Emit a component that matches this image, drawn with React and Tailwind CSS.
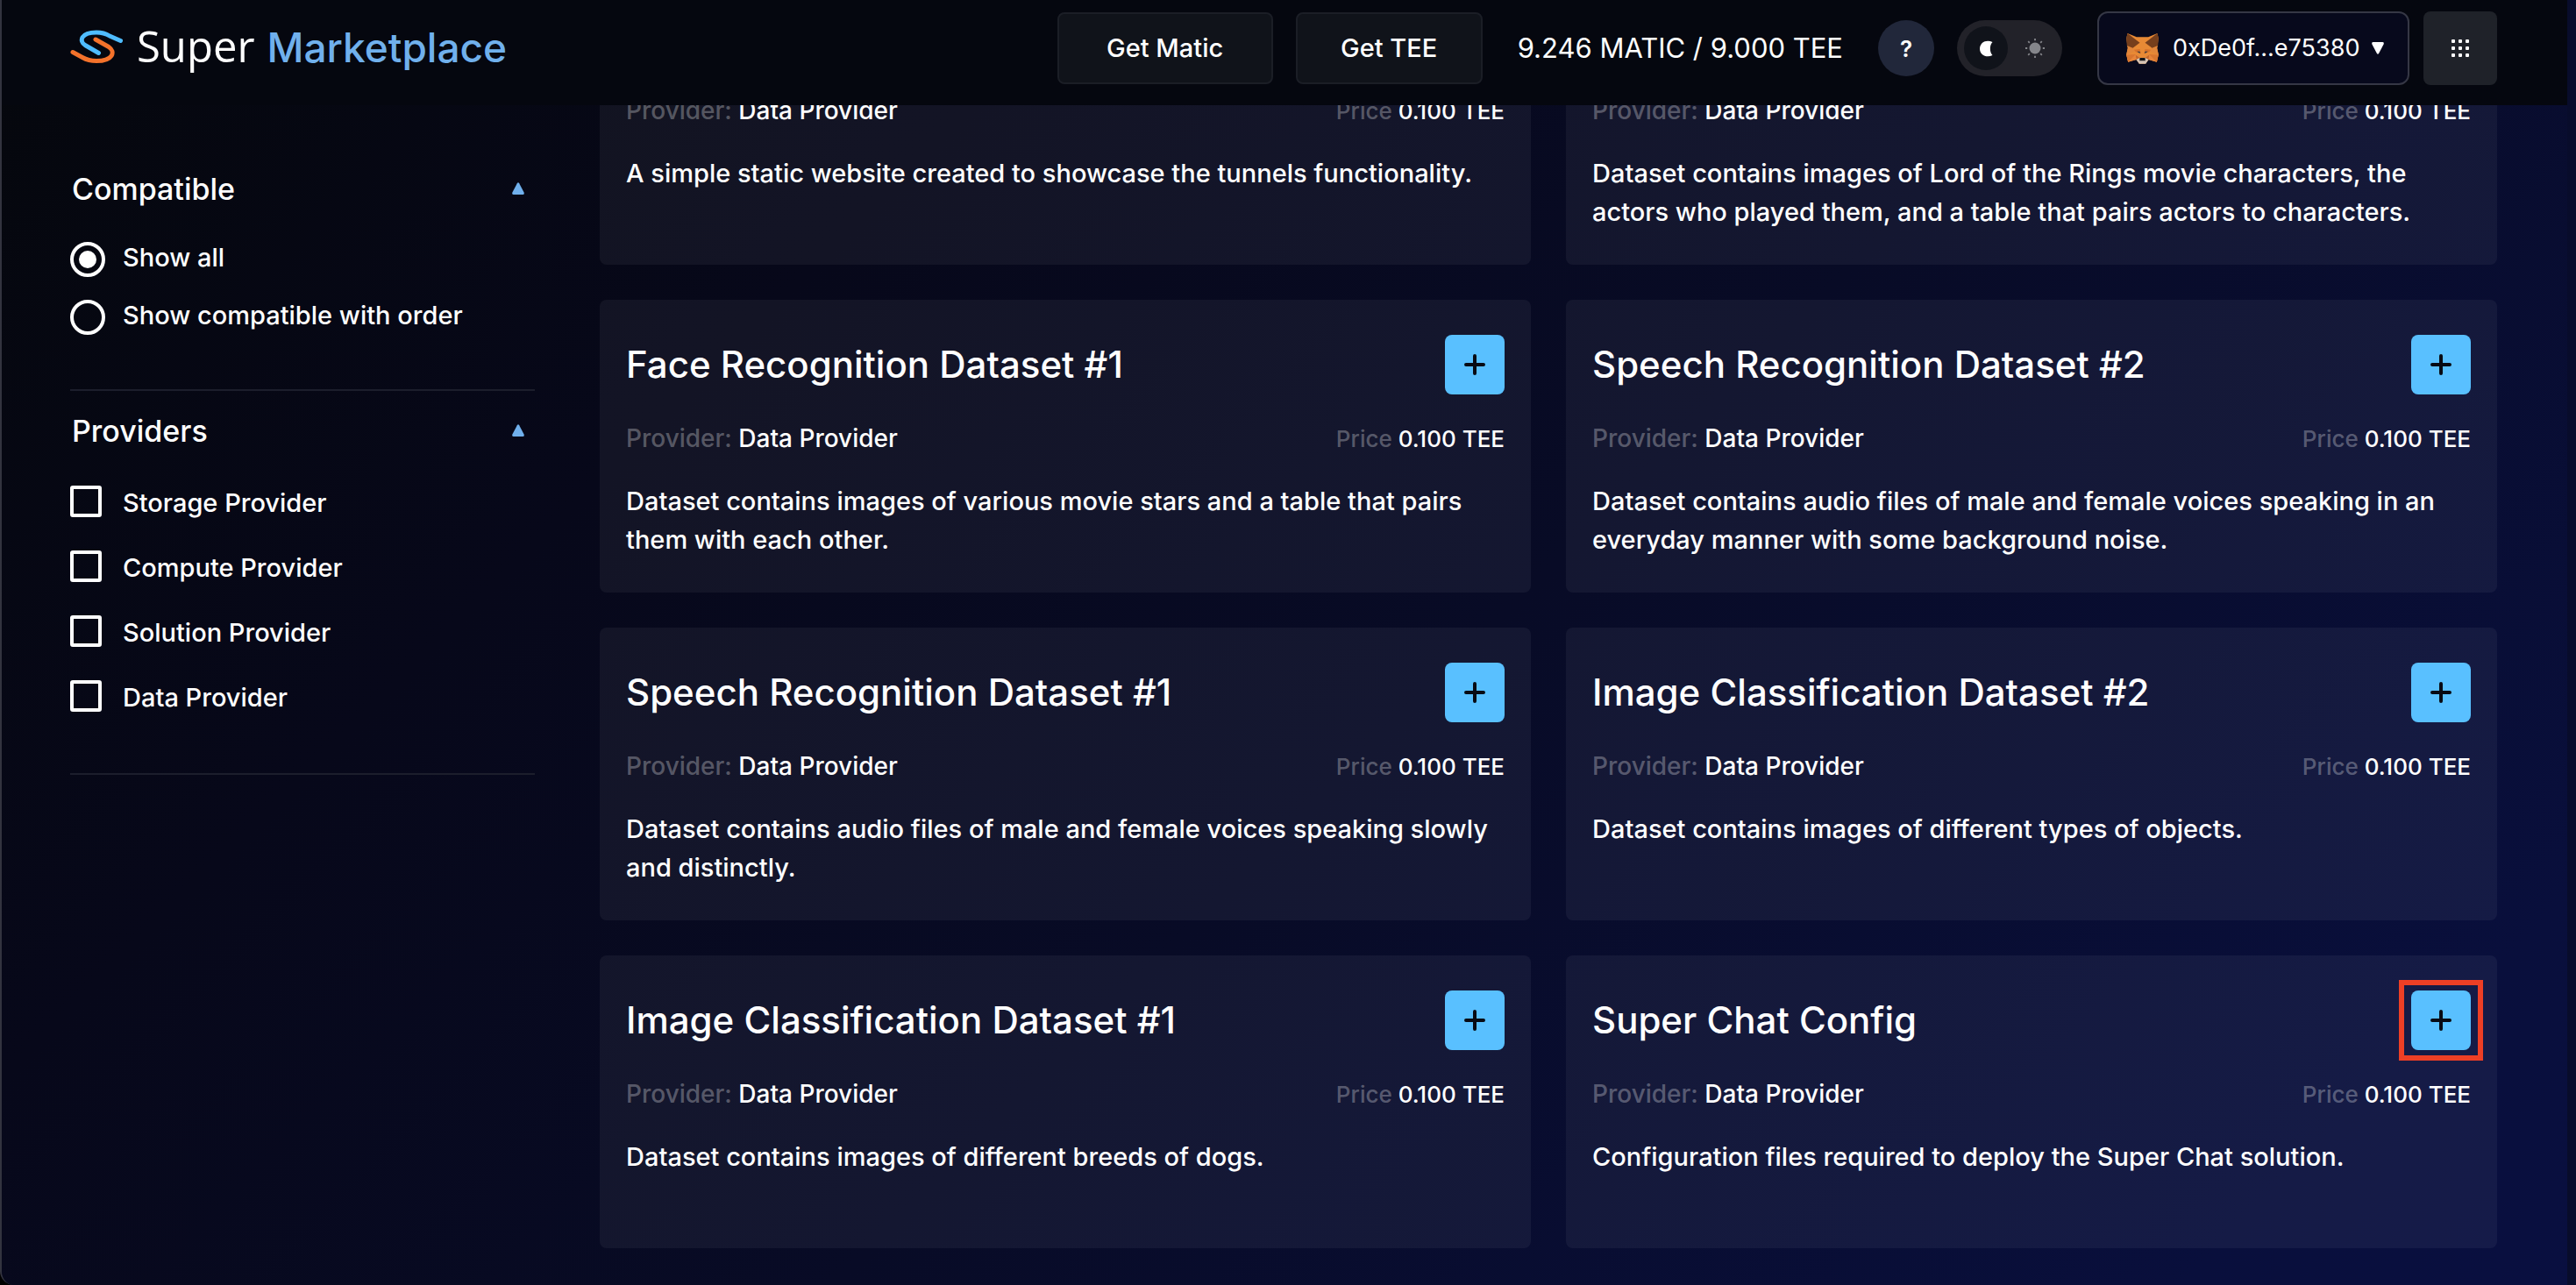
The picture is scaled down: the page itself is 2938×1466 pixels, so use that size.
const offers = [
  { title: "Face Recognition Dataset #1", text: "Dataset contains images of various movie stars and a table that pairs them with each other." },
  { title: "Speech Recognition Dataset #2", text: "Dataset contains audio files of male and female voices speaking in an everyday manner with some background noise." },
  { title: "Speech Recognition Dataset #1", text: "Dataset contains audio files of male and female voices speaking slowly and distinctly." },
  { title: "Image Classification Dataset #2", text: "Dataset contains images of different types of objects." },
  { title: "Image Classification Dataset #1", text: "Dataset contains images of different breeds of dogs." },
  { title: "Super Chat Config", text: "Configuration files required to deploy the Super Chat solution.", marked: true },
];

const scrolledOffers = [
  "A simple static website created to showcase the tunnels functionality.",
  "Dataset contains images of Lord of the Rings movie characters, the actors who played them, and a table that pairs actors to characters.",
];

const providers = ["Storage Provider", "Compute Provider", "Solution Provider", "Data Provider"];

function LogoMark() {
  return (
    <svg viewBox="0 0 60 38" className="h-[38px] w-[60px]" fill="none" strokeWidth="5" strokeLinecap="round" aria-hidden="true">
      <path d="M32.500 26.500 L17 17.500 C10 13 12 3 30 3 C38 3 41 4.500 45 7 L57.500 12.500" stroke="#4fbcff" strokeLinejoin="round" />
      <path d="M3 25.500 L14 31.500 C20 35 24 35.500 30 35.500 C49 35.500 52 25 44 19.500 L29 11" stroke="#f4722b" strokeLinejoin="round" />
    </svg>
  );
}

function Fox() {
  return (
    <svg viewBox="0 0 110 105" className="h-[35px] w-[37px]" aria-hidden="true">
      <path d="M4 0 35 13H75L106 0 110 18 105 50 110 72 104 98 76 90 66 104H44L34 90 6 98 0 72 5 50 0 18Z" fill="#e88a35" />
      <path d="M2 42 22 50 28 62 0 74 5 50ZM108 42 88 50 82 62 110 74 105 50Z" fill="#e2863a" />
      <path d="M0 72H32L34 90 6 98ZM110 72H78L76 90 104 98Z" fill="#e8853a" />
      <path d="M32 72 6 98 0 74ZM78 72 104 98 110 74Z" fill="#d9762f" />
      <path d="M4 0 46 32 22 50 2 42 0 18ZM106 0 64 32 88 50 108 42 110 18Z" fill="#763f1c" />
      <path d="M26 56 46 54 50 70 32 64ZM84 56 64 54 60 70 78 64Z" fill="#d6722c" />
      <path d="M36 62 46 62 47 69ZM74 62 64 62 63 69Z" fill="#2a3540" />
      <path d="M32 74 46 84 34 90ZM78 74 64 84 76 90Z" fill="#c4662c" />
      <path d="M34 90 46 84H64L76 90 66 104H44Z" fill="#d3c3b5" />
      <path d="M46 84H64L65 94H45Z" fill="#15161a" />
    </svg>
  );
}

function Moon() {
  return (
    <svg viewBox="0 0 15 19" className="h-[19px] w-[15px]" aria-hidden="true">
      <path d="M14.500 2 C11 5.500 11 13.500 14.500 17 C8 20.500 0 17 0 9.500 C0 2 8 -1.500 14.500 2Z" fill="#fff" />
    </svg>
  );
}

function Sun() {
  return (
    <svg viewBox="0 0 24 24" className="size-6" stroke="#85868b" strokeWidth="1.800" aria-hidden="true">
      <circle cx="12" cy="12" r="6.500" fill="#85868b" stroke="none" />
      <path d="M12 1V3.200M12 20.800V23M1 12H3.200M20.800 12H23M4.200 4.200 5.800 5.800M18.200 18.200 19.800 19.800M4.200 19.800 5.800 18.200M18.200 5.800 19.800 4.200" />
    </svg>
  );
}

function Triangle({ className }) {
  return (
    <svg viewBox="0 0 14 14" className={className} fill="currentColor" aria-hidden="true">
      <path d="M5.800 1.300Q7 -.6 8.200 1.300L13.600 11.500Q14.300 14 12.300 14H1.700Q-.3 14 .4 11.500Z" />
    </svg>
  );
}

function Dots() {
  return (
    <svg viewBox="0 0 20 20" className="size-5" fill="#fff" aria-hidden="true">
      {[0, 8, 16].map((y) => [0, 8, 16].map((x) => <rect key={x + "-" + y} x={x} y={y} width="4" height="4" rx="1" />))}
    </svg>
  );
}

function Plus() {
  return (
    <svg viewBox="0 0 24 24" className="size-6" stroke="#080b14" strokeWidth="4" strokeLinecap="round" aria-hidden="true">
      <path d="M12 2V22M2 12H22" />
    </svg>
  );
}

function Meta() {
  return (
    <div className="flex h-11 items-center justify-between font-medium">
      <p className="text-[28px]"><span className="text-white/30">Provider:</span> Data Provider</p>
      <p className="text-[26px]"><span className="text-white/30">Price</span> 0.100 TEE</p>
    </div>
  );
}

function Description({ children }) {
  return <p className="mt-7 mb-[2px] min-h-[88px] text-[29px] leading-[44px] font-medium">{children}</p>;
}

function Card({ title, text, marked }) {
  return (
    <article className="rounded-lg bg-white/5 px-[30px] pt-10 pb-9">
      <div className="mb-7 flex items-center justify-between">
        <h2 className="text-[42px] leading-[68px] font-medium">{title}</h2>
        <div className="relative">
          <button type="button" aria-label={"Add " + title} className="flex size-[68px] items-center justify-center rounded-lg bg-[#59c0ff]">
            <Plus />
          </button>
          {marked && <span className="pointer-events-none absolute -inset-x-[14px] -inset-y-3 border-6 border-[#ed3f25]" />}
        </div>
      </div>
      <Meta />
      <Description>{text}</Description>
    </article>
  );
}

function SectionTitle({ children }) {
  return (
    <button type="button" className="flex h-12 w-full items-center justify-between pr-3 pl-[2px] text-[34px] font-medium">
      {children}
      <Triangle className="size-[14px] text-[#70b0ec]" />
    </button>
  );
}

function Radio({ label, checked }) {
  return (
    <label className="flex h-[42px] items-center gap-5 text-[29px] leading-10 font-medium">
      <input
        type="radio"
        name="compatible"
        defaultChecked={checked}
        className="grid size-10 appearance-none place-items-center rounded-full border-4 border-white before:size-5 before:rounded-full checked:before:bg-white"
      />
      <span className="pb-1">{label}</span>
    </label>
  );
}

function Header() {
  return (
    <header className="flex h-[120px] items-start bg-[#05070f] pr-20 pl-[78px]">
      <a href="#" className="flex items-center gap-4 pt-[22px]">
        <LogoMark />
        <span className="flex items-baseline gap-[14px] text-[46px] leading-[60px]">
          <span className="font-['Open_Sans',sans-serif] text-[49px]">Super</span>
          <span className="font-medium text-[#70b0ec]">Marketplace</span>
        </span>
      </a>
      <div className="ml-auto flex h-[110px] items-center text-[29px]">
        <button type="button" className="h-[82px] w-[246px] rounded-lg border-2 border-[#1b1e26] bg-[#10131a] font-medium">Get Matic</button>
        <button type="button" className="ml-[26px] h-[82px] w-[213px] rounded-lg border-2 border-[#1b1e26] bg-[#10131a] font-medium">Get TEE</button>
        <p className="ml-10 text-[31px]">9.246 MATIC / 9.000 TEE</p>
        <button type="button" aria-label="Help" className="ml-10 size-16 rounded-full bg-[#21273a] text-[26px] font-semibold">?</button>
        <button type="button" aria-label="Switch theme" className="ml-[26px] flex h-16 w-[120px] items-center justify-between rounded-full bg-[#222229] pr-[19px] pl-2">
          <span className="flex size-[50px] items-center justify-center rounded-full bg-[#10131a]"><Moon /></span>
          <Sun />
        </button>
        <button type="button" className="ml-10 flex h-[84px] w-[356px] items-center rounded-xl border-2 border-[#353745] bg-[#07091c] pl-[31px] text-[27px]">
          <Fox />
          <span className="ml-4">0xDe0f...e75380</span>
          <Triangle className="ml-[14px] size-[14px] rotate-180" />
        </button>
        <button type="button" aria-label="Apps" className="ml-4 flex size-[84px] items-center justify-center rounded-lg bg-[#1f2229]"><Dots /></button>
      </div>
    </header>
  );
}

export default function App() {
  return (
    <div className="h-screen overflow-hidden bg-black">
      <div className="h-full overflow-hidden rounded-bl-2xl border-l-2 border-[#33343f] bg-[#080c2b] pr-[10px] font-['Inter',sans-serif] text-white">
        <div className="flex h-full flex-col bg-linear-[135deg,#05070c_0%,#07081a_28%,#080b26_55%,#090f3c_90%,#090f40_100%]">
          <Header />
          <div className="flex flex-1 items-start gap-[74px] overflow-hidden pr-20 pl-[78px]">
            <aside className="w-[530px] shrink-0 pt-[71px]">
              <section className="border-b-2 border-[#1c1e2c] pb-[61px]">
                <SectionTitle>Compatible</SectionTitle>
                <div className="mt-9 flex flex-col gap-6">
                  <Radio label="Show all" checked />
                  <Radio label="Show compatible with order" />
                </div>
              </section>
              <section className="border-b-2 border-[#1c1e2c] pt-[21px] pb-[70px]">
                <SectionTitle>Providers</SectionTitle>
                <div className="mt-[39px] flex flex-col gap-[38px]">
                  {providers.map((name) => (
                    <label key={name} className="flex h-9 items-center gap-6 text-[29px] leading-9 font-medium">
                      <input type="checkbox" className="size-9 appearance-none rounded-[3px] border-4 border-white checked:bg-white" />
                      <span className="pt-1">{name}</span>
                    </label>
                  ))}
                </div>
              </section>
            </aside>
            <main className="-mt-4 grid flex-1 grid-cols-2 gap-10">
              {scrolledOffers.map((text) => (
                <article key={text} className="rounded-b-lg bg-white/5 px-[30px] pb-9">
                  <Meta />
                  <Description>{text}</Description>
                </article>
              ))}
              {offers.map((offer) => <Card key={offer.title} {...offer} />)}
            </main>
          </div>
        </div>
      </div>
    </div>
  );
}
